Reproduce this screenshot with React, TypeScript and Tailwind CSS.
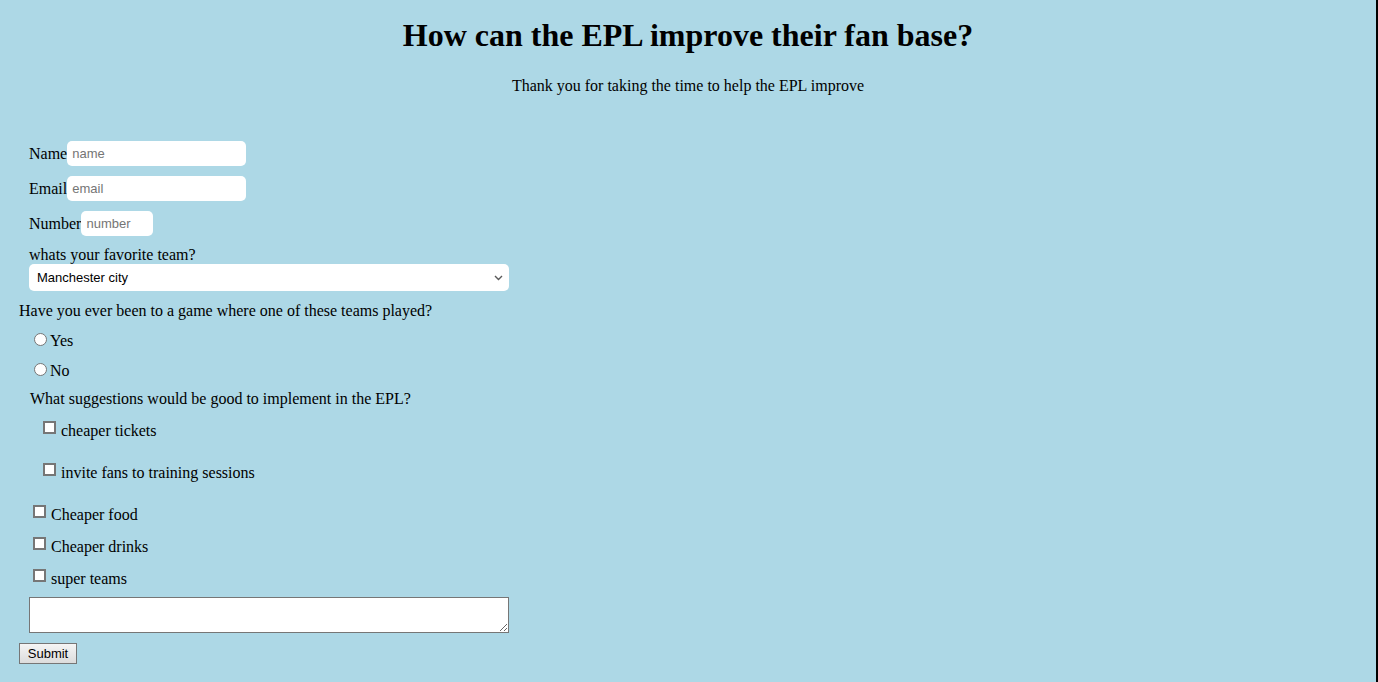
import { ChangeEvent, useState } from 'react';

const teams = ['Manchester city', 'Liverpool', 'Arsenal', 'Chelsea', 'Manchester united', 'Tottenham'];

function Box({ checked }: { checked?: boolean }) {
  return <span className={`block w-[13px] h-[13px] shrink-0 border-2 border-[#767676] ${checked ? 'bg-[#0075ff]' : 'bg-white'}`} />;
}

function CheckRow({ label, indent, checked, onToggle }: { label: string; indent: string; checked: boolean; onToggle: () => void }) {
  return (
    <label className={`flex items-start cursor-pointer ${indent}`} onClick={onToggle}>
      <Box checked={checked} />
      <span className="pt-[1px] pl-[5px] leading-[18px]">{label}</span>
    </label>
  );
}

export default function App() {
  const [team, setTeam] = useState(teams[0]);
  const [been, setBeen] = useState<'yes' | 'no' | null>(null);
  const [picks, setPicks] = useState<Record<string, boolean>>({});

  const toggle = (k: string) => setPicks((p) => ({ ...p, [k]: !p[k] }));

  const inputCls =
    "h-[25px] rounded-[5px] bg-white pl-[5px] text-[13px] font-['Liberation_Sans',Arial,sans-serif] outline-none placeholder:text-[#757575]";

  return (
    <div className="min-h-screen bg-[#add8e6] border-r-2 border-black font-['Liberation_Serif','Times_New_Roman',serif] text-[16px] text-black">
      {/* Header */}
      <h1 className="pt-[17px] text-center text-[32px] font-bold leading-[37px]">How can the EPL improve their fan base?</h1>
      <p className="mt-[23px] text-center leading-[18px]">Thank you for taking the time to help the EPL improve</p>

      {/* Form */}
      <form className="flex flex-col items-start" onSubmit={(e) => e.preventDefault()}>
        <div className="mt-[46px] flex items-center pl-[29px]">
          <span className="leading-[18px]">Name</span>
          <input className={`${inputCls} w-[179px]`} placeholder="name" />
        </div>
        <div className="mt-[10px] flex items-center pl-[29px]">
          <span className="leading-[18px]">Email</span>
          <input className={`${inputCls} w-[179px]`} placeholder="email" />
        </div>
        <div className="mt-[10px] flex items-center pl-[29px]">
          <span className="leading-[18px]">Number</span>
          <input className={`${inputCls} w-[72px]`} placeholder="number" />
        </div>

        <div className="mt-[10px] pl-[29px] leading-[18px]">whats your favorite team?</div>
        <div className="relative ml-[29px]">
          <select
            value={team}
            onChange={(e: ChangeEvent<HTMLSelectElement>) => setTeam(e.target.value)}
            className="block h-[27px] w-[480px] appearance-none rounded-[5px] bg-white pl-[8px] text-[13px] text-black font-['Liberation_Sans',Arial,sans-serif] outline-none"
          >
            {teams.map((t) => (
              <option key={t}>{t}</option>
            ))}
          </select>
          <svg className="pointer-events-none absolute right-[6px] top-[11px]" width="9" height="6" viewBox="0 0 9 6" fill="none">
            <path d="M1 1L4.5 4.5L8 1" stroke="#595959" strokeWidth="1.4" />
          </svg>
        </div>

        <div className="mt-[11px] pl-[19px] leading-[18px]">Have you ever been to a game where one of these teams played?</div>
        {(['yes', 'no'] as const).map((v) => (
          <label key={v} className="mt-[12px] flex items-start pl-[34px] cursor-pointer" onClick={() => setBeen(v)}>
            <span className="mt-[1px] flex h-[13px] w-[13px] items-center justify-center rounded-full border border-[#767676] bg-white">
              {been === v && <span className="h-[7px] w-[7px] rounded-full bg-[#0075ff]" />}
            </span>
            <span className="pl-[3px] leading-[18px]">{v === 'yes' ? 'Yes' : 'No'}</span>
          </label>
        ))}

        <div className="mt-[10px] pl-[30px] leading-[18px]">What suggestions would be good to implement in the EPL?</div>
        <div className="mt-[13px]">
          <CheckRow label="cheaper tickets" indent="pl-[43px]" checked={!!picks.tickets} onToggle={() => toggle('tickets')} />
        </div>
        <div className="mt-[23px]">
          <CheckRow label="invite fans to training sessions" indent="pl-[43px]" checked={!!picks.training} onToggle={() => toggle('training')} />
        </div>
        <div className="mt-[23px]">
          <CheckRow label="Cheaper food" indent="pl-[33px]" checked={!!picks.food} onToggle={() => toggle('food')} />
        </div>
        <div className="mt-[13px]">
          <CheckRow label="Cheaper drinks" indent="pl-[33px]" checked={!!picks.drinks} onToggle={() => toggle('drinks')} />
        </div>
        <div className="mt-[13px]">
          <CheckRow label="super teams" indent="pl-[33px]" checked={!!picks.teams} onToggle={() => toggle('teams')} />
        </div>

        <textarea className="mt-[9px] ml-[29px] block h-[36px] w-[480px] border border-[#767676] bg-white outline-none" />

        <button
          type="submit"
          className="mt-[10px] ml-[19px] mb-[18px] h-[21px] w-[58px] border border-[#767676] bg-gradient-to-b from-[#f5f5f5] to-[#dcdcdc] text-[13px] leading-[19px] font-['Liberation_Sans',Arial,sans-serif]"
        >
          Submit
        </button>
      </form>
    </div>
  );
}
